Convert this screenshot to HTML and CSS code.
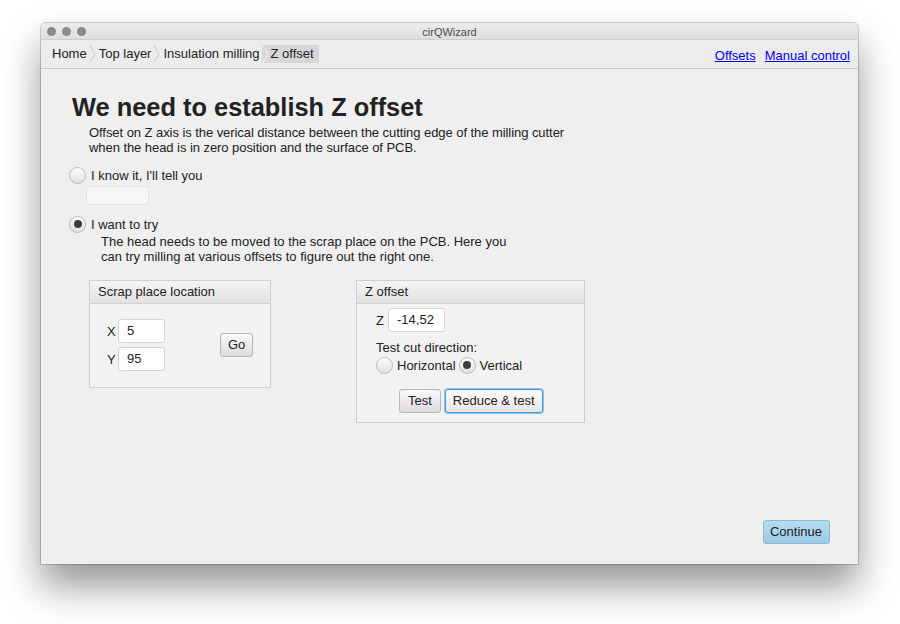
FILE: index.html
```html
<!DOCTYPE html>
<html>
<head>
<meta charset="utf-8">
<link rel="stylesheet" href="styles.css">
</head>
<body>
<div class="window">
  <div class="titlebar">
    <div class="lights"><span class="light"></span><span class="light"></span><span class="light"></span></div>
    <div class="title">cirQWizard</div>
  </div>
  <div class="toolbar">
    <div class="crumbs">
      <span class="crumb">Home</span>
      <svg class="chev" width="7" height="18" viewBox="0 0 7 18"><polyline points="1,0.5 6,9 1,17.5" fill="none" stroke="#c4c4c4" stroke-width="1"/></svg>
      <span class="crumb">Top layer</span>
      <svg class="chev" width="7" height="18" viewBox="0 0 7 18"><polyline points="1,0.5 6,9 1,17.5" fill="none" stroke="#c4c4c4" stroke-width="1"/></svg>
      <span class="crumb">Insulation milling</span>
      <span class="crumb current"><svg class="chev inner" width="7" height="18" viewBox="0 0 7 18"><polyline points="1,0.5 6,9 1,17.5" fill="none" stroke="#f4f4f4" stroke-width="1"/></svg>Z offset</span>
    </div>
    <div class="links">
      <a href="#">Offsets</a>
      <a href="#">Manual control</a>
    </div>
  </div>
  <div class="content">
    <h1 class="heading">We need to establish Z offset</h1>
    <p class="desc">Offset on Z axis is the verical distance between the cutting edge of the milling cutter<br>when the head is in zero position and the surface of PCB.</p>
    <div class="radio-row first"><span class="radio"></span><span>I know it, I'll tell you</span></div>
    <div class="known-field"></div>
    <div class="radio-row second"><span class="radio checked"></span><span>I want to try</span></div>
    <p class="desc2">The head needs to be moved to the scrap place on the PCB. Here you<br>can try milling at various offsets to figure out the right one.</p>
    <div class="panels">
      <div class="panel scrap">
        <div class="panel-head">Scrap place location</div>
        <div class="panel-body scrap-body">
          <div class="coords">
            <div class="coord"><span class="lbl">X</span><span class="field small">5</span></div>
            <div class="coord"><span class="lbl">Y</span><span class="field small">95</span></div>
          </div>
          <span class="btn go">Go</span>
        </div>
      </div>
      <div class="panel zoff">
        <div class="panel-head">Z offset</div>
        <div class="panel-body zoff-body">
          <div class="coord"><span class="lbl">Z</span><span class="field zfield">-14,52</span></div>
          <div class="dir-label">Test cut direction:</div>
          <div class="dir-row">
            <span class="radio"></span><span class="dir-text">Horizontal</span>
            <span class="radio checked"></span><span class="dir-text">Vertical</span>
          </div>
          <div class="btn-row">
            <span class="btn test">Test</span>
            <span class="btn focused">Reduce &amp; test</span>
          </div>
        </div>
      </div>
    </div>
    <div class="footer"><span class="btn primary">Continue</span></div>
  </div>
</div>
</body>
</html>
```
FILE: styles.css
```css
* { box-sizing: border-box; }
html, body { margin: 0; padding: 0; }
body {
  background: #ffffff;
  width: 900px;
  height: 624px;
  overflow: hidden;
  font-family: "Liberation Sans", Arial, sans-serif;
  font-size: 13px;
  color: #222;
}
.window {
  margin: 23px 0 0 41px;
  width: 817px;
  height: 541px;
  display: flex;
  flex-direction: column;
  border-radius: 5px 5px 0 0;
  background: #efefef;
  box-shadow: 0 22px 38px rgba(0,0,0,0.42), 0 0 0 1px rgba(0,0,0,0.18);
  overflow: hidden;
}
.titlebar {
  height: 17px;
  display: flex;
  align-items: center;
  position: relative;
  background: linear-gradient(#ececec, #dedede);
  border-bottom: 1px solid #cfcfcf;
}
.lights { display: flex; gap: 6px; padding-left: 6px; }
.light {
  width: 9px; height: 9px; border-radius: 50%;
  background: #8d8d8d;
  border: 1px solid #808080;
}
.title {
  position: absolute;
  left: 0; right: 0; top: 1px;
  text-align: center;
  line-height: 17px;
  font-size: 11px;
  color: #4a4a4a;
}
.toolbar {
  height: 29px;
  display: flex;
  align-items: center;
  justify-content: space-between;
  padding: 1px 8px 0 11px;
  background: #ececec;
  border-bottom: 1px solid #c6c6c6;
}
.crumbs { display: flex; align-items: center; margin-top: -1px; }
.crumb { line-height: 18px; }
.chev { display: block; margin: 0 3px 0 2px; }
.crumb.current {
  display: flex;
  align-items: center;
  background: #d7d7d7;
  padding: 0 5px 0 0;
  margin-left: 2px;
}
.chev.inner { margin: 0 2px 0 0; }
.links { display: flex; gap: 9px; padding-left: 1px; margin-top: 1px; }
.links a { color: #0000ee; text-decoration: underline; }
.content {
  flex: 1;
  display: flex;
  flex-direction: column;
  padding: 24px 28px 20px 31px;
}
.heading {
  margin: 0;
  font-size: 25.4px;
  line-height: 28px;
  font-weight: bold;
  color: #222;
}
.desc {
  margin: 4px 0 0 17px;
  line-height: 15px;
  letter-spacing: -0.06px;
}
.radio-row {
  display: flex;
  align-items: center;
  gap: 5px;
  height: 18px;
}
.radio-row.first { margin: 11px 0 0 -3px; }
.radio-row.second { margin: 10px 0 0 -3px; }
.radio {
  width: 17px; height: 17px;
  border-radius: 50%;
  border: 1px solid #b9b9b9;
  background: linear-gradient(#fdfdfd, #e0e0e0);
  display: inline-flex;
  align-items: center;
  justify-content: center;
  flex: none;
}
.radio.checked::after {
  content: "";
  width: 8px; height: 8px;
  border-radius: 50%;
  background: #3d3d3d;
}
.known-field {
  margin: 2px 0 0 14px;
  width: 63px; height: 19px;
  background: #f6f6f6;
  border: 1px solid #e2e2e2;
  border-radius: 2px;
}
.desc2 {
  margin: 1px 0 0 29px;
  line-height: 15px;
}
.panels {
  display: flex;
  align-items: flex-start;
  gap: 85px;
  margin: 16px 0 0 17px;
}
.panel {
  border: 1px solid #cfcfcf;
  background: #f2f2f2;
}
.panel.scrap { width: 182px; height: 108px; }
.panel.zoff { width: 229px; height: 143px; }
.panel-head {
  height: 23px;
  line-height: 22px;
  padding-left: 8px;
  background: linear-gradient(#f5f5f5, #e2e2e2);
  border-bottom: 1px solid #d0d0d0;
}
.scrap-body {
  display: flex;
  align-items: center;
  padding: 15px 0 0 17px;
}
.coords { display: flex; flex-direction: column; gap: 4px; }
.coord { display: flex; align-items: center; gap: 3px; }
.lbl { width: 8px; }
.field {
  display: inline-block;
  height: 24px;
  line-height: 22px;
  padding-left: 8px;
  background: #fff;
  border: 1px solid #d3d3d3;
  border-radius: 3px;
}
.field.small { width: 47px; }
.field.zfield { width: 57px; }
.btn {
  display: inline-block;
  height: 24px;
  line-height: 22px;
  padding: 0 7px;
  background: linear-gradient(#fafafa, #dcdcdc);
  border: 1px solid #b6b6b6;
  border-radius: 3px;
  color: #222;
}
.btn.go { margin-left: 55px; margin-top: 0; }
.zoff-body { padding: 4px 0 0 19px; }
.zoff-body .coord { gap: 4px; }
.dir-label { margin: 8px 0 0 0; line-height: 16px; }
.dir-row {
  display: flex;
  align-items: center;
  margin-left: 0;
  height: 18px;
}
.dir-text { margin: 0 3px 0 4px; }
.btn-row {
  display: flex;
  gap: 4px;
  margin: 15px 0 0 23px;
}
.btn.test { padding: 0 8px; }
.btn.focused {
  border: 1px solid #3a9ad9;
  box-shadow: 0 0 0 1px #8cc4ea;
  background: linear-gradient(#fcfcfc, #e6e6e6);
  padding: 0 7px;
}
.footer {
  margin-top: auto;
  display: flex;
  justify-content: flex-end;
}
.btn.primary {
  background: linear-gradient(#b6dcef, #9ccde6);
  border: 1px solid #86b9d6;
  padding: 0 7px 0 6px;
}
```
